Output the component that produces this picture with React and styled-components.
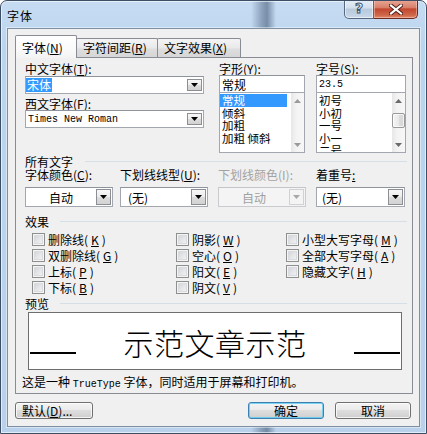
import React from "react";
import styled, { createGlobalStyle } from "styled-components";

const CJK = `"Noto Sans CJK SC", "Noto Sans", sans-serif`;
const MONO = `"Liberation Mono", "DejaVu Sans Mono", monospace`;

const GlobalStyle = createGlobalStyle`
  html, body { margin: 0; padding: 0; background: #fff; overflow: hidden; }
  body { font-family: ${CJK}; font-size: 12px; color: #000; }
  * { box-sizing: border-box; }
`;

const Window = styled.div`
  position: relative;
  width: 427px;
  height: 434px;
  border: 1px solid #3d4f66;
  border-radius: 7px 7px 0 0;
  background:
    linear-gradient(90deg, rgba(255,255,255,0) 250px, rgba(70,92,120,0.45) 261px, rgba(70,92,120,0.6) 266px, rgba(255,255,255,0) 275px),
    linear-gradient(180deg, #c6dcf3 0%, #bcd5ee 10%, #b9d1eb 100%);
  box-shadow: inset 0 0 0 1px rgba(255,255,255,0.6);
  display: flex;
  flex-direction: column;
  font-family: ${CJK};
  font-size: 12px;
  line-height: 13px;
  overflow: hidden;
`;

const TitleBar = styled.div`
  height: 27px;
  display: flex;
  align-items: flex-start;
`;

const Title = styled.div`
  padding: 8px 0 0 6px;
  font-size: 12px;
  line-height: 14px;
  letter-spacing: 1px;
  color: #000;
`;

const CaptionButtons = styled.div`
  margin-left: auto;
  margin-top: -1px;
  margin-right: 8px;
  display: flex;
`;

const HelpButton = styled.div`
  width: 30px;
  height: 19px;
  border: 1px solid #56687f;
  border-top: none;
  border-radius: 0 0 0 5px;
  background: linear-gradient(180deg, #e6eef7 0%, #d3dfec 45%, #b8c9dc 50%, #c9d8e9 100%);
  box-shadow: inset 0 0 0 1px rgba(255,255,255,0.55);
  display: flex;
  align-items: center;
  justify-content: center;
  font-family: "DejaVu Sans", sans-serif;
  font-weight: bold;
  font-size: 14px;
  color: #f4f6f9;
  -webkit-text-stroke: 1px #44546a;
  padding-bottom: 1px;
`;

const CloseButton = styled.div`
  width: 44px;
  height: 19px;
  border: 1px solid #6a2a22;
  border-top: none;
  border-left: none;
  border-radius: 0 0 5px 0;
  background: linear-gradient(180deg, #e9a897 0%, #d8806a 42%, #c2472f 50%, #d0694b 85%, #e08c68 100%);
  box-shadow: inset 0 0 0 1px rgba(255,220,210,0.45);
  display: flex;
  align-items: center;
  justify-content: center;
`;

const Client = styled.div`
  position: relative;
  margin: 0 6px;
  height: 399px;
  background: #f0f0f0;
  border: 1px solid #7e8ea3;
  box-shadow: 0 0 0 1px rgba(255,255,255,0.45);
  padding: 6px 7px 0 7px;
  display: flex;
  flex-direction: column;
`;

const Tabs = styled.div`
  position: relative;
  z-index: 1;
  height: 23px;
  display: flex;
  align-items: flex-end;
  margin-bottom: -1px;
`;

const Tab = styled.div`
  position: relative;
  z-index: ${p => (p.$active ? 2 : 1)};
  width: ${p => p.$w}px;
  height: ${p => (p.$active ? 23 : 19)}px;
  margin-bottom: ${p => (p.$active ? 0 : 1)}px;
  margin-left: ${p => (p.$first ? 0 : -1)}px;
  border: 1px solid #898c95;
  border-bottom: none;
  border-radius: 2px 2px 0 0;
  background: ${p =>
    p.$active
      ? "linear-gradient(180deg, #ffffff 0%, #fafafa 60%, #f3f3f3 100%)"
      : "linear-gradient(180deg, #f4f4f4 0%, #e9e9e9 50%, #dedede 55%, #d6d6d6 100%)"};
  padding: ${p => (p.$active ? 5 : 2)}px 0 0 6px;
  white-space: nowrap;
  line-height: 13px;
`;

const Panel = styled.div`
  height: 337px;
  width: 398px;
  border: 1px solid #898c95;
  background: #f0f0f0;
  padding: 4px 5px 0 9px;
  display: flex;
  flex-direction: column;
`;

const FontSection = styled.div`
  display: grid;
  grid-template-columns: 194px 97px 90px;
  height: 91px;
`;

const Column = styled.div`
  display: flex;
  flex-direction: column;
  width: ${p => p.$w}px;
`;

const Label = styled.div`
  height: 13px;
  line-height: 13px;
  white-space: nowrap;
  color: ${p => (p.$disabled ? "#a3a3a3" : "#000")};
  margin-top: ${p => p.$mt || 0}px;
`;

const U = styled.span`
  text-decoration: underline;
  text-underline-offset: 1px;
`;

const Mono = styled.span`
  font-family: ${MONO};
  font-size: 10px;
`;

const Combo = styled.div`
  width: ${p => p.$w}px;
  height: ${p => p.$h || 18}px;
  margin-top: ${p => p.$mt || 0}px;
  display: flex;
  align-items: stretch;
  border: 1px solid ${p => (p.$disabled ? "#c9cbcf" : "#a3a8b0")};
  border-top-color: ${p => (p.$disabled ? "#c3c5c9" : "#8e949c")};
  background: ${p => (p.$disabled ? "#f4f4f4" : "#fff")};
`;

const ComboText = styled.div`
  flex: 1;
  display: flex;
  align-items: center;
  justify-content: ${p => (p.$center ? "center" : "flex-start")};
  padding-left: ${p => p.$pl || 0}px;
  color: ${p => (p.$disabled ? "#a0a0a0" : "#000")};
  white-space: nowrap;
  overflow: hidden;
`;

const Selected = styled.span`
  background: #3399ff;
  color: #fff;
  padding: 0 1px;
  line-height: 14px;
`;

const ComboButton = styled.div`
  width: 15px;
  margin: ${p => (p.$inset ? "2px 1px 2px 0" : "1px 1px 1px 0")};
  border: 1px solid ${p => (p.$disabled ? "#cfd1d4" : "#8b8e92")};
  background: ${p =>
    p.$disabled ? "#f4f4f4" : "linear-gradient(180deg, #f7f7f7 0%, #ececec 50%, #dcdcdc 51%, #d2d2d2 100%)"};
  display: flex;
  align-items: center;
  justify-content: center;
`;

const TextBox = styled.div`
  height: 18px;
  border: 1px solid #a3a8b0;
  border-top-color: #8e949c;
  background: #fff;
  padding-left: ${p => p.$pl || 2}px;
  display: flex;
  align-items: center;
  white-space: nowrap;
`;

const ListBox = styled.div`
  height: 61px;
  margin-top: -1px;
  border: 1px solid #a3a8b0;
  background: #fff;
  display: flex;
  overflow: hidden;
`;

const ListItems = styled.div`
  flex: 1;
  padding-top: 1px;
  overflow: hidden;
`;

const ListItem = styled.div`
  height: 12.5px;
  line-height: 12.5px;
  font-size: 11.5px;
  margin-right: 4px;
  padding-left: 2px;
  white-space: nowrap;
  background: ${p => (p.$selected ? "#3399ff" : "transparent")};
  color: ${p => (p.$selected ? "#fff" : "#000")};
`;

const ScrollBar = styled.div`
  width: 13px;
  display: flex;
  flex-direction: column;
  background: linear-gradient(90deg, #e7e7e7 0%, #f3f3f3 40%, #f7f7f7 100%);
`;

const ScrollArrow = styled.div`
  height: 15px;
  display: flex;
  align-items: center;
  justify-content: center;
`;

const ScrollTrack = styled.div`
  flex: 1;
  padding-top: 5px;
`;

const Thumb = styled.div`
  height: 15px;
  border: 1px solid #97999c;
  border-radius: 2px;
  background: linear-gradient(90deg, #f4f4f4 0%, #e9e9e9 50%, #dcdcdc 51%, #d7d7d7 100%);
  box-shadow: inset 0 0 0 1px rgba(255,255,255,0.7);
`;

const GroupHeader = styled.div`
  display: flex;
  align-items: center;
  height: 13px;
  margin-top: ${p => p.$mt}px;
  white-space: nowrap;
  &::after {
    content: "";
    flex: 1;
    height: 1px;
    margin-left: ${p => p.$gap}px;
    background: #d5dfe5;
  }
`;

const FieldGrid = styled.div`
  display: grid;
  grid-template-columns: 95px 98px 98px 89px;
  margin-top: ${p => p.$mt || 0}px;
`;

const EffectsGrid = styled.div`
  display: grid;
  grid-template-columns: 144px 110px 1fr;
  grid-template-rows: repeat(4, 16px);
  grid-auto-flow: column;
  margin-top: 3px;
  padding-left: 7px;
`;

const CheckItem = styled.div`
  display: flex;
  align-items: center;
  gap: 3px;
  white-space: nowrap;
`;

const CheckBox = styled.span`
  width: 13px;
  height: 13px;
  flex: none;
  border: 1px solid #8e8f8f;
  background: linear-gradient(135deg, #cbced3 0%, #e6e7e9 55%, #f6f6f6 100%);
  box-shadow: inset 0 0 0 1px #f4f4f4, inset 0 0 0 2px #d9dbde;
`;

const PreviewBox = styled.div`
  width: 374px;
  height: 58px;
  margin: 2px 0 0 3px;
  border: 1px solid #6e6e6e;
  background: #fff;
  display: flex;
`;

const PreviewLine = styled.div`
  width: 46px;
  height: 2px;
  margin-top: 39px;
  background: #000;
  margin-left: ${p => p.$ml || 0}px;
  margin-right: ${p => p.$mr || 0}px;
`;

const PreviewText = styled.div`
  flex: 1;
  align-self: center;
  text-align: center;
  font-size: 30px;
  line-height: 32px;
  font-weight: 300;
  padding-top: 2px;
  letter-spacing: 0.5px;
`;

const Description = styled.div`
  margin: 5px 0 0 -3px;
  height: 13px;
  line-height: 13px;
  white-space: nowrap;
`;

const ButtonRow = styled.div`
  margin-top: 8px;
  width: 396px;
  display: flex;
`;

const Button = styled.div`
  width: ${p => p.$w}px;
  height: 17px;
  margin-left: ${p => (p.$push ? "auto" : "0")};
  margin-right: ${p => p.$mr || 0}px;
  border: 1px solid ${p => (p.$default ? "#3c7fb1" : "#707070")};
  border-radius: 3px;
  background: linear-gradient(180deg, #f3f3f3 0%, #ebebeb 45%, #dddddd 50%, #cfcfcf 100%);
  box-shadow: inset 0 0 0 1px ${p => (p.$default ? "rgba(80,200,245,0.75)" : "rgba(255,255,255,0.75)")};
  display: flex;
  align-items: center;
  justify-content: ${p => (p.$left ? "flex-start" : "center")};
  padding-left: ${p => (p.$left ? 6 : 0)}px;
  line-height: 13px;
  white-space: nowrap;
`;

const Arrow = ({ color = "#000" }) => (
  <svg width="7" height="4" viewBox="0 0 7 4">
    <path d="M0 0H7L3.5 4Z" fill={color} />
  </svg>
);

const SmallArrow = ({ up, color = "#8a8a8a" }) => (
  <svg width="7" height="4" viewBox="0 0 7 4">
    <path d={up ? "M3.5 0L7 4H0Z" : "M0 0H7L3.5 4Z"} fill={color} />
  </svg>
);

const CloseGlyph = () => (
  <svg width="14" height="11" viewBox="0 0 14 11">
    <path d="M2 1.5L12 9.5M12 1.5L2 9.5" stroke="#4a1c14" strokeWidth="4" strokeLinecap="square" />
    <path d="M2 1.5L12 9.5M12 1.5L2 9.5" stroke="#ffffff" strokeWidth="2.2" strokeLinecap="square" />
  </svg>
);

const Scroll = ({ thumb, color }) => (
  <ScrollBar>
    <ScrollArrow><SmallArrow up color={color} /></ScrollArrow>
    <ScrollTrack>{thumb && <Thumb />}</ScrollTrack>
    <ScrollArrow><SmallArrow color={color} /></ScrollArrow>
  </ScrollBar>
);

export default function App() {
  return (
    <>
      <GlobalStyle />
      <Window>
        <TitleBar>
          <Title>字体</Title>
          <CaptionButtons>
            <HelpButton>?</HelpButton>
            <CloseButton><CloseGlyph /></CloseButton>
          </CaptionButtons>
        </TitleBar>
        <Client>
          <Tabs>
            <Tab $active $first $w={62}>字体(<U>N</U>)</Tab>
            <Tab $w={82}>字符间距(<U>R</U>)</Tab>
            <Tab $w={84}>文字效果(<U>X</U>)</Tab>
          </Tabs>
          <Panel>
            <FontSection>
              <Column $w={179}>
                <Label>中文字体(<U>T</U>):</Label>
                <Combo $w={179} $mt={1}>
                  <ComboText $pl={0}><Selected>宋体</Selected></ComboText>
                  <ComboButton $inset><Arrow /></ComboButton>
                </Combo>
                <Label $mt={3}>西文字体(<U>F</U>):</Label>
                <Combo $w={179}>
                  <ComboText $pl={2}><Mono>Times New Roman</Mono></ComboText>
                  <ComboButton $inset><Arrow /></ComboButton>
                </Combo>
              </Column>
              <Column $w={86}>
                <Label>字形(<U>Y</U>):</Label>
                <TextBox>常规</TextBox>
                <ListBox>
                  <ListItems>
                    <ListItem $selected>常规</ListItem>
                    <ListItem>倾斜</ListItem>
                    <ListItem>加粗</ListItem>
                    <ListItem>加粗 倾斜</ListItem>
                  </ListItems>
                  <Scroll color="#9a9a9a" />
                </ListBox>
              </Column>
              <Column $w={90}>
                <Label>字号(<U>S</U>):</Label>
                <TextBox><Mono>23.5</Mono></TextBox>
                <ListBox>
                  <ListItems>
                    <ListItem>初号</ListItem>
                    <ListItem>小初</ListItem>
                    <ListItem>一号</ListItem>
                    <ListItem>小一</ListItem>
                    <ListItem>二号</ListItem>
                  </ListItems>
                  <Scroll thumb color="#6a6a6a" />
                </ListBox>
              </Column>
            </FontSection>

            <GroupHeader $mt={2} $gap={12}>所有文字</GroupHeader>
            <FieldGrid>
              <Label>字体颜色(<U>C</U>):</Label>
              <Label>下划线线型(<U>U</U>):</Label>
              <Label $disabled>下划线颜色(I):</Label>
              <Label>着重号<U>:</U></Label>
            </FieldGrid>
            <FieldGrid $mt={6}>
              <Combo $w={88} $h={20}>
                <ComboText $center>自动</ComboText>
                <ComboButton><Arrow /></ComboButton>
              </Combo>
              <Combo $w={88} $h={20}>
                <ComboText $pl={7}>(无)</ComboText>
                <ComboButton><Arrow /></ComboButton>
              </Combo>
              <Combo $w={88} $h={20} $disabled>
                <ComboText $center $disabled>自动</ComboText>
                <ComboButton $disabled><Arrow color="#a8a8a8" /></ComboButton>
              </Combo>
              <Combo $w={89} $h={20}>
                <ComboText $pl={5}>(无)</ComboText>
                <ComboButton><Arrow /></ComboButton>
              </Combo>
            </FieldGrid>

            <GroupHeader $mt={8} $gap={11}>效果</GroupHeader>
            <EffectsGrid>
              <CheckItem><CheckBox />删除线(<U>K</U>)</CheckItem>
              <CheckItem><CheckBox />双删除线(<U>G</U>)</CheckItem>
              <CheckItem><CheckBox />上标(<U>P</U>)</CheckItem>
              <CheckItem><CheckBox />下标(<U>B</U>)</CheckItem>
              <CheckItem><CheckBox />阴影(<U>W</U>)</CheckItem>
              <CheckItem><CheckBox />空心(<U>O</U>)</CheckItem>
              <CheckItem><CheckBox />阳文(<U>E</U>)</CheckItem>
              <CheckItem><CheckBox />阴文(<U>V</U>)</CheckItem>
              <CheckItem><CheckBox />小型大写字母(<U>M</U>)</CheckItem>
              <CheckItem><CheckBox />全部大写字母(<U>A</U>)</CheckItem>
              <CheckItem><CheckBox />隐藏文字(<U>H</U>)</CheckItem>
            </EffectsGrid>

            <GroupHeader $mt={2} $gap={11}>预览</GroupHeader>
            <PreviewBox>
              <PreviewLine $ml={1} />
              <PreviewText>示范文章示范</PreviewText>
              <PreviewLine $mr={1} />
            </PreviewBox>
            <Description>
              这是一种 <Mono>TrueType</Mono> 字体，同时适用于屏幕和打印机。
            </Description>
          </Panel>
          <ButtonRow>
            <Button $w={78} $left>默认(<U>D</U>)...</Button>
            <Button $w={76} $push $mr={11} $default>确定</Button>
            <Button $w={76}>取消</Button>
          </ButtonRow>
        </Client>
      </Window>
    </>
  );
}
